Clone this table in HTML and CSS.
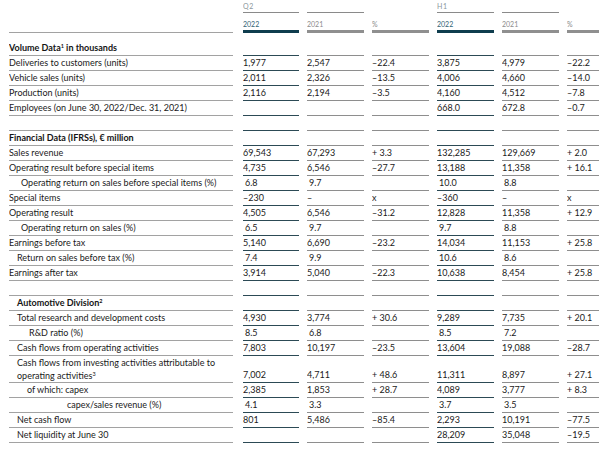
FILE: index.html
```html
<!DOCTYPE html>
<html lang="en">
<head>
<meta charset="utf-8">
<title>Key figures</title>
<link rel="stylesheet" href="styles.css">
</head>
<body>
<div class="table">
  <div class="row hd1">
    <div class="lbl none"></div>
    <div class="c top">Q2</div>
    <div class="c top"></div>
    <div class="c none"></div>
    <div class="c top">H1</div>
    <div class="c top"></div>
    <div class="c none"></div>
  </div>
  <div class="row hd2">
    <div class="lbl"></div>
    <div class="c bar22">2022</div>
    <div class="c bar">2021</div>
    <div class="c bar">%</div>
    <div class="c bar22">2022</div>
    <div class="c bar">2021</div>
    <div class="c bar">%</div>
  </div>
  <div class="row sec first">
    <div class="lbl b">Volume Data<sup>1</sup> in thousands</div>
    <div class="c y22"></div><div class="c"></div><div class="c"></div><div class="c y22"></div><div class="c"></div><div class="c"></div>
  </div>
  <div class="row">
    <div class="lbl">Deliveries to customers (units)</div>
    <div class="c y22">1,977</div><div class="c">2,547</div><div class="c">–22.4</div><div class="c y22">3,875</div><div class="c">4,979</div><div class="c">–22.2</div>
  </div>
  <div class="row">
    <div class="lbl">Vehicle sales (units)</div>
    <div class="c y22">2,011</div><div class="c">2,326</div><div class="c">–13.5</div><div class="c y22">4,006</div><div class="c">4,660</div><div class="c">–14.0</div>
  </div>
  <div class="row">
    <div class="lbl">Production (units)</div>
    <div class="c y22">2,116</div><div class="c">2,194</div><div class="c">–3.5</div><div class="c y22">4,160</div><div class="c">4,512</div><div class="c">–7.8</div>
  </div>
  <div class="row">
    <div class="lbl">Employees (on June 30, 2022/Dec. 31, 2021)</div>
    <div class="c y22"></div><div class="c"></div><div class="c"></div><div class="c y22">668.0</div><div class="c">672.8</div><div class="c">–0.7</div>
  </div>
  <div class="row">
    <div class="lbl"></div>
    <div class="c y22"></div><div class="c"></div><div class="c"></div><div class="c y22"></div><div class="c"></div><div class="c"></div>
  </div>
  <div class="row">
    <div class="lbl b">Financial Data (IFRSs), € million</div>
    <div class="c y22"></div><div class="c"></div><div class="c"></div><div class="c y22"></div><div class="c"></div><div class="c"></div>
  </div>
  <div class="row">
    <div class="lbl">Sales revenue</div>
    <div class="c y22">69,543</div><div class="c">67,293</div><div class="c">+ 3.3</div><div class="c y22">132,285</div><div class="c">129,669</div><div class="c">+ 2.0</div>
  </div>
  <div class="row">
    <div class="lbl">Operating result before special items</div>
    <div class="c y22">4,735</div><div class="c">6,546</div><div class="c">–27.7</div><div class="c y22">13,188</div><div class="c">11,358</div><div class="c">+ 16.1</div>
  </div>
  <div class="row pct">
    <div class="lbl i2">Operating return on sales before special items (%)</div>
    <div class="c y22">6.8</div><div class="c">9.7</div><div class="c"></div><div class="c y22">10.0</div><div class="c">8.8</div><div class="c"></div>
  </div>
  <div class="row">
    <div class="lbl">Special items</div>
    <div class="c y22">–230</div><div class="c">–</div><div class="c">x</div><div class="c y22">–360</div><div class="c">–</div><div class="c">x</div>
  </div>
  <div class="row">
    <div class="lbl">Operating result</div>
    <div class="c y22">4,505</div><div class="c">6,546</div><div class="c">–31.2</div><div class="c y22">12,828</div><div class="c">11,358</div><div class="c">+ 12.9</div>
  </div>
  <div class="row pct">
    <div class="lbl i2">Operating return on sales (%)</div>
    <div class="c y22">6.5</div><div class="c">9.7</div><div class="c"></div><div class="c y22">9.7</div><div class="c">8.8</div><div class="c"></div>
  </div>
  <div class="row">
    <div class="lbl">Earnings before tax</div>
    <div class="c y22">5,140</div><div class="c">6,690</div><div class="c">–23.2</div><div class="c y22">14,034</div><div class="c">11,153</div><div class="c">+ 25.8</div>
  </div>
  <div class="row pct">
    <div class="lbl i1">Return on sales before tax (%)</div>
    <div class="c y22">7.4</div><div class="c">9.9</div><div class="c"></div><div class="c y22">10.6</div><div class="c">8.6</div><div class="c"></div>
  </div>
  <div class="row">
    <div class="lbl">Earnings after tax</div>
    <div class="c y22">3,914</div><div class="c">5,040</div><div class="c">–22.3</div><div class="c y22">10,638</div><div class="c">8,454</div><div class="c">+ 25.8</div>
  </div>
  <div class="row">
    <div class="lbl"></div>
    <div class="c y22"></div><div class="c"></div><div class="c"></div><div class="c y22"></div><div class="c"></div><div class="c"></div>
  </div>
  <div class="row">
    <div class="lbl b i1">Automotive Division<sup>2</sup></div>
    <div class="c y22"></div><div class="c"></div><div class="c"></div><div class="c y22"></div><div class="c"></div><div class="c"></div>
  </div>
  <div class="row">
    <div class="lbl i1">Total research and development costs</div>
    <div class="c y22">4,930</div><div class="c">3,774</div><div class="c">+ 30.6</div><div class="c y22">9,289</div><div class="c">7,735</div><div class="c">+ 20.1</div>
  </div>
  <div class="row pct">
    <div class="lbl i3">R&amp;D ratio (%)</div>
    <div class="c y22">8.5</div><div class="c">6.8</div><div class="c"></div><div class="c y22">8.5</div><div class="c">7.2</div><div class="c"></div>
  </div>
  <div class="row">
    <div class="lbl i1">Cash flows from operating activities</div>
    <div class="c y22">7,803</div><div class="c">10,197</div><div class="c">–23.5</div><div class="c y22">13,604</div><div class="c">19,088</div><div class="c">–28.7</div>
  </div>
  <div class="row two">
    <div class="lbl i1">Cash flows from investing activities attributable to<br>operating activities<sup>3</sup></div>
    <div class="c y22">7,002</div><div class="c">4,711</div><div class="c">+ 48.6</div><div class="c y22">11,311</div><div class="c">8,897</div><div class="c">+ 27.1</div>
  </div>
  <div class="row">
    <div class="lbl i4">of which: capex</div>
    <div class="c y22">2,385</div><div class="c">1,853</div><div class="c">+ 28.7</div><div class="c y22">4,089</div><div class="c">3,777</div><div class="c">+ 8.3</div>
  </div>
  <div class="row pct">
    <div class="lbl i5">capex/sales revenue (%)</div>
    <div class="c y22">4.1</div><div class="c">3.3</div><div class="c"></div><div class="c y22">3.7</div><div class="c">3.5</div><div class="c"></div>
  </div>
  <div class="row">
    <div class="lbl i1">Net cash flow</div>
    <div class="c y22">801</div><div class="c">5,486</div><div class="c">–85.4</div><div class="c y22">2,293</div><div class="c">10,191</div><div class="c">–77.5</div>
  </div>
  <div class="row">
    <div class="lbl i1">Net liquidity at June 30</div>
    <div class="c y22"></div><div class="c"></div><div class="c"></div><div class="c y22">28,209</div><div class="c">35,048</div><div class="c">–19.5</div>
  </div>
</div>
</body>
</html>
```
FILE: styles.css
```css
html, body {
  margin: 0;
  padding: 0;
  background: #ffffff;
}
body {
  font-family: Lato, "Open Sans", "DejaVu Sans", sans-serif;
  font-size: 9px;
  color: #1a1a1a;
  height: 451px;
  overflow: hidden;
}
.table {
  padding-left: 9px;
}
.row {
  display: grid;
  grid-template-columns: 226px 56px 57px 57px 57px 57px 32px;
  column-gap: 8px;
  height: 15px;
  line-height: 14px;
}
.row > div {
  border-bottom: 1px solid #8e8e8e;
  white-space: nowrap;
  overflow: hidden;
}
.row > .lbl {
  margin-right: 2px;
  border-bottom-color: #a2a2a2;
}
.row > .y22 {
  border-bottom-color: #2c4a55;
}
.b {
  font-weight: 700;
  color: #141414;
}
sup {
  font-size: 5.5px;
  line-height: 0;
  vertical-align: 3px;
}
.i1 { padding-left: 8px; }
.i2 { padding-left: 12px; }
.i3 { padding-left: 20px; }
.i4 { padding-left: 18px; }
.i5 { padding-left: 58px; }
.pct .c { padding-left: 2px; }

/* header rows */
.hd1 {
  height: 13px;
  line-height: 12px;
  font-size: 7px;
  color: #8a979c;
  letter-spacing: 0.6px;
}
.hd1 > .none,
.hd1 > .lbl {
  border-bottom: none;
}
.hd1 > .top {
  border-bottom: 1px solid #8a8a8a;
}
.hd2 {
  height: 20px;
  font-size: 7px;
  line-height: 12px;
  color: #8c8c8c;
}
.hd2 > .c {
  padding-top: 5px;
}
.hd2 > .bar {
  border-bottom: 3px solid #8f8f8f;
}
.hd2 > .bar22 {
  border-bottom: 3px solid #0f3d4e;
  color: #2f6474;
}
.sec {
  height: 23px;
}
.sec > div {
  padding-top: 8px;
}
.two {
  height: 27px;
}
.two > .lbl {
  line-height: 13px;
}
.two > .c {
  padding-top: 12px;
}
```
